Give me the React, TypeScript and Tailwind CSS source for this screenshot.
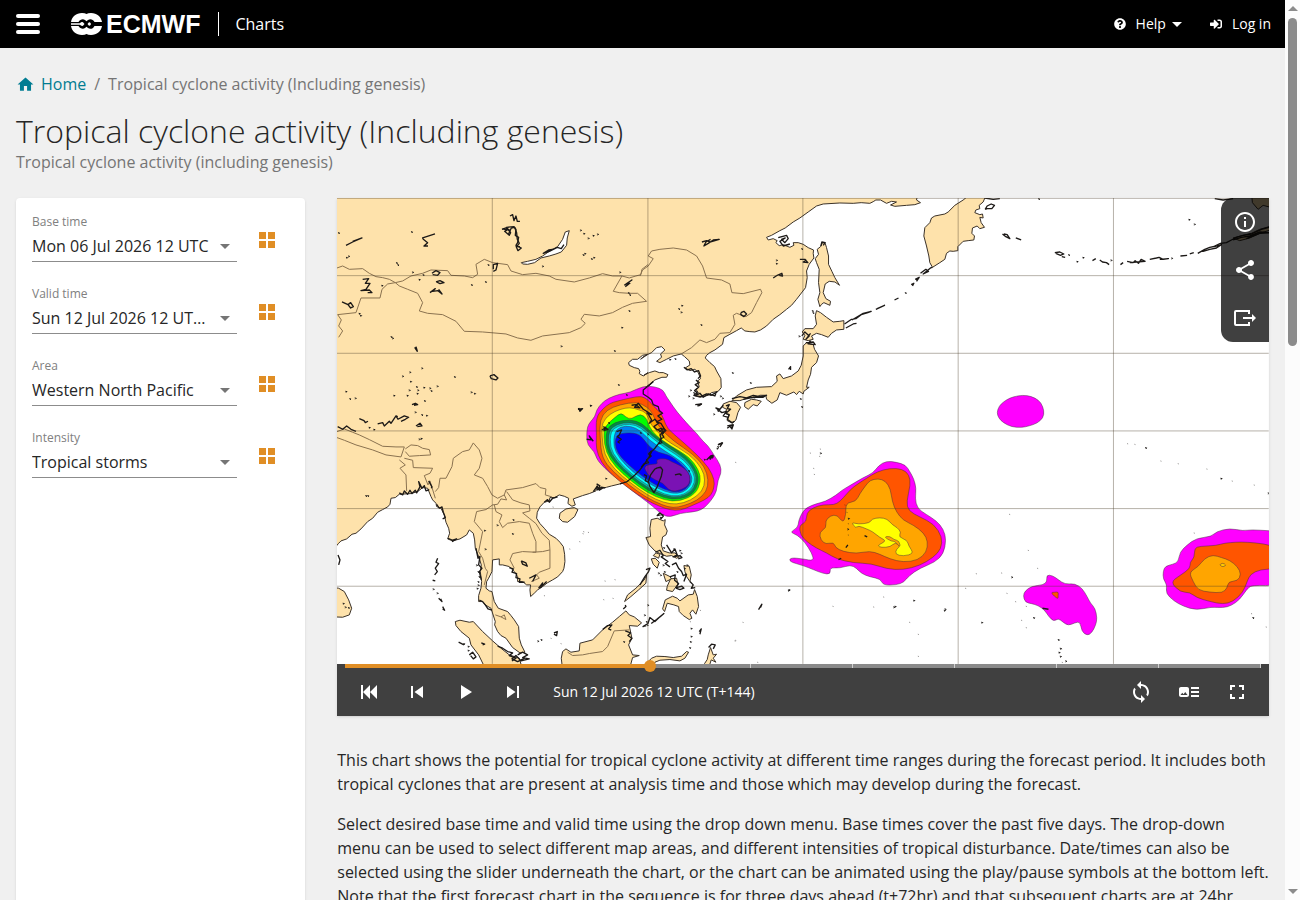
import { FaQuestionCircle, FaSignInAlt } from 'react-icons/fa';
import {
  MdArrowDropDown,
  MdArtTrack,
  MdFullscreen,
  MdHome,
  MdInfoOutline,
  MdLoop,
  MdPlayArrow,
  MdShare,
  MdSkipNext,
  MdSkipPrevious,
} from 'react-icons/md';

interface Field {
  id: string;
  label: string;
  value: string;
}

interface Layer {
  fill: string;
  points: string;
}

const fields: Field[] = [
  { id: 'base-time', label: 'Base time', value: 'Mon 06 Jul 2026 12 UTC' },
  { id: 'valid-time', label: 'Valid time', value: 'Sun 12 Jul 2026 12 UTC (T+144)' },
  { id: 'area', label: 'Area', value: 'Western North Pacific' },
  { id: 'intensity', label: 'Intensity', value: 'Tropical storms' },
];

const steps = [96, 120, 144, 168, 192, 216, 240, 264, 288];
const current = 144;

const LAND = '#fee2ab';
const COAST = '#3a3128';
const BORDER = '#8a714f';

// The map is drawn in sheets. Each sheet has its own origin on the 2796 x 1398 chart.
function sheet(dx: number, dy: number, points: string) {
  return points
    .trim()
    .split(/\s+/)
    .map(p => {
      const [x, y] = p.split(',').map(Number);
      return `${x + dx},${y + dy}`;
    })
    .join(' ');
}

// Closed curve through the midpoints of the outline
function smooth(points: string) {
  const list = points.split(' ').map(p => p.split(',').map(Number));
  const mids = list.map(([x, y], i) => {
    const [nx, ny] = list[(i + 1) % list.length];
    return [(x + nx) / 2, (y + ny) / 2];
  });
  const curves = mids.map((_, i) => {
    const next = (i + 1) % list.length;
    return `Q${list[next].join(',')} ${mids[next].join(',')}`;
  });
  return `M${mids[0].join(',')}${curves.join('')}Z`;
}

const nw = (p: string) => sheet(0, 0, p);
const north = (p: string) => sheet(912, 0, p);
const ne = (p: string) => sheet(1842, 0, p);
const sw = (p: string) => sheet(0, 687, p);
const storm = (p: string) => sheet(732, 552, p);
const south = (p: string) => sheet(912, 687, p);
const se = (p: string) => sheet(1842, 687, p);

const mainland = [
  north(`835,-10 830,12 842,20 825,26 800,28 765,31 752,27 770,18 755,16 740,22 722,12 708,12 700,17 690,22 664,20 640,22
    600,21 550,24 530,30 505,48 480,66 460,78 436,96 420,104 395,118 380,124 385,132 400,128 412,134 408,140 418,149 430,146
    450,154 462,148 460,140 475,140 490,145 505,155 521,162 520,172 522,186 508,205 500,225 502,245 497,275 470,310 455,328 440,340
    420,356 400,370 380,390 362,402 345,408 330,407 315,405 304,396 290,404 270,415 252,425 248,445 225,462 210,470 200,478
    196,486 210,500 224,512 230,525 243,548 244,575 235,586 215,590 205,598 180,604 166,600 175,590 168,580 178,572 172,556 182,548 175,530
    165,520 150,524 136,516 150,507 148,495 134,482 124,474 100,480 80,490 60,500 50,496 65,484 62,474 75,462 65,452 50,455 35,470 10,482 2,490`),
  nw('936,475 920,478 905,490 890,490 878,500 880,508 895,515 908,518 912,526 910,533 922,540 936,530'),
  north('12,538 28,530 45,525 58,530 70,530 84,536 80,544 66,544 45,552 30,565 22,570 15,575 5,590'),
  storm(`220,5 190,30 190,42 205,52 215,60 220,74 235,80 238,92 248,100 234,108 246,118 230,126 243,130 255,150 240,165 244,176 240,185 225,205
    215,215 208,230 195,250 180,270 165,285 150,298 140,306 120,312 95,318 80,322`),
  sw(`800,190 786,192 784,182 780,198 760,206 740,212 712,222 718,240 708,244 696,236 698,220 685,214 670,210 656,218 642,218 640,228 625,232 612,246
    604,262 602,280 612,296 625,310 640,328 660,340 672,352 682,365 686,388 687,410 684,430 680,440 665,456 650,465 634,474 620,485 605,495 595,505
    584,515 582,495 584,480 572,480 560,470 545,470 545,455 535,440 520,425 500,420 490,420 490,402 470,405 468,440 458,460 452,470 450,490 460,498 468,500
    475,530 487,550 515,560 525,572 535,585 548,605 550,640 556,660 567,682 552,684 530,668 510,640 495,632 485,620 476,600 478,590 465,550
    448,540 440,530 428,530 428,512 435,490 437,470 433,440 436,420 430,400 418,370 416,345 412,325 400,315 392,330 372,342 350,348 335,342 341,325
    338,310 330,292 325,270 315,250 302,245 300,235 290,225 285,215 275,190 260,188 245,200 225,206 190,208 178,218 165,220 162,238 155,246 140,254
    125,262 110,280 95,290 75,312 60,325 48,328 32,342 15,348 8,355 -6,372`),
].join(' ');

const islands = [
  // Kamchatka
  [
    north('878,214 870,200 867,180 860,150 852,120 855,95 870,80 875,66 885,60 915,54 925,48'),
    ne(`15,28 40,12 62,-6 110,-6 100,18 88,28 90,38 78,42 75,50 90,56 98,54 100,66 90,64 94,80 104,94 90,98 82,90 68,96 66,112
      74,120 72,132 55,134 40,136 32,144 24,152 24,164 10,166`),
    north('930,165 920,172 915,190 900,200'),
  ].join(' '),
  // Sakhalin
  north('548,140 556,142 560,155 566,180 566,205 576,226 585,245 599,268 585,258 568,256 556,264 550,290 558,308 572,316 570,328 552,320 545,325 540,332 534,310 540,290 536,260 538,220 530,200 526,188 536,175 532,160 542,152'),
  // Hokkaido
  north('530,344 542,350 560,364 580,378 600,376 612,374 612,400 590,402 575,412 565,424 545,416 530,412 515,420 520,430 505,434 490,430 495,418 487,408 495,398 520,398 530,385 526,360'),
  // Honshu
  north(`500,440 520,446 524,460 536,480 530,500 515,514 512,535 505,552 500,574 508,574 492,586 490,594 478,586 470,596 462,588 440,598 420,590 412,612
    396,622 380,610 378,598 360,598 345,606 330,604 300,614 276,614 290,600 320,582 350,574 395,572 412,556 410,540 420,534 430,548 455,540
    475,525 484,508 490,480 490,450`),
  // Shikoku
  north('315,620 335,610 350,612 364,616 352,630 340,626 325,640 314,632'),
  // Kyushu
  north('250,624 270,616 290,620 302,634 294,650 288,672 278,682 262,674 268,658 256,652 260,640 248,634'),
  // Hainan
  sw('672,265 690,252 715,248 726,254 716,275 695,292 680,290 670,280'),
  // Sri Lanka
  sw('-6,488 8,490 25,500 38,525 47,550 40,570 20,577 -6,576'),
  // Sumatra
  sw('358,590 372,586 400,592 412,590 440,620 470,648 495,670 520,690 550,700 560,735 450,735 428,690 405,660 400,640 375,620 360,602'),
  // Borneo
  sw(`680,735 676,700 680,680 690,672 705,682 730,678 732,655 770,645 800,615 830,592 850,575 870,558 880,570 895,576 917,594 905,604 880,602
    888,640 878,660 890,690 910,692 890,698 880,735`),
  // Palawan
  sw('866,530 875,510 900,490 925,465 932,450 930,475 908,495 885,515'),
  // Sulawesi
  south('20,715 35,700 50,694 75,695 100,698 125,694 140,680 146,682 135,700 120,708 90,704 60,706 45,712 38,730 15,735'),
  // Luzon
  south('34,284 52,280 70,288 76,284 74,300 82,318 78,330 68,336 64,360 70,378 88,384 105,384 118,396 110,400 95,392 80,394 60,386 45,378 28,360 18,338 32,335 30,310'),
  // Visayas
  south('34,402 46,400 58,412 52,430 40,418'),
  south('132,422 148,424 154,450 150,470 140,455 135,440'),
  south('70,445 90,455 95,462 78,470'),
  south('92,462 110,460 114,478 98,500 80,496 82,484'),
  // Mindanao
  south('164,494 172,515 176,545 168,568 158,555 150,565 156,580 148,584 130,572 118,560 116,545 102,540 82,535 74,560 68,552 76,525 98,514 112,520 120,528 145,510 160,508'),
  // Halmahera
  south('205,690 212,668 220,690 230,688 220,700 228,712 214,705 206,730 194,716 202,704'),
  // Mindoro
  south('48,384 60,388 56,400 40,392'),
  // Alaska peninsula
  ne('850,126 880,118 905,112 930,100 965,90 962,102 930,112 900,126 870,134'),
  ne('905,-10 908,20 925,40 940,28 970,36 970,-10'),
];

const lakes = [
  nw('556,200 575,196 600,190 620,180 640,166 665,152 680,130 688,108 700,104 694,126 692,148 676,168 660,174 640,180 615,186 596,200 575,205 560,204'),
];

const borders = [
  nw('3,216 20,210 40,220 80,218 100,232 120,242 140,245 160,250 178,260 200,255 225,240 260,232 285,222 335,224 345,238 385,240 410,245 425,235 420,205 445,190 470,200 515,206 525,225 560,236 600,232 640,240 660,250 715,258 760,246 800,233 830,240 858,240 832,286 850,290 880,292 905,292 932,316'),
  nw('178,260 190,270 215,280 245,292 260,320 250,345 275,352 320,356 360,376 385,406 440,408 510,414 545,426 585,433 620,420 700,410 735,395 748,382 735,370 745,355 790,360 830,350 860,334 890,322 932,316'),
  nw('178,260 155,264 138,280 132,306 75,306 60,350 5,356 16,372 8,390 20,405 8,424'),
  nw('858,240 880,246 900,240 915,236 918,220 936,206'),
  north('0,240 8,222 25,210 40,188 25,180 35,165 60,160 100,156 140,162 170,180 188,210 200,246 245,252 270,264 276,290 310,293 362,280 366,290 350,320 335,350 318,362 290,352 280,358 285,385 270,410 240,412 225,430 200,440 180,432 155,455 124,474'),
  sw('3,20 25,12 50,22 70,30 100,44 140,64 180,66 205,66 195,96 150,90 110,75 60,60 25,46 3,38'),
  sw('208,72 225,60 245,62 260,70 280,74 284,90 250,92 220,94 208,80'),
  sw('205,100 230,106 232,128 290,130 282,145 265,152 276,180 282,168 298,220'),
  sw('190,105 208,120 192,130 210,150 212,198'),
  sw('298,200 308,188 312,160 330,160 348,125 352,100 380,80 400,75 412,54 430,75 438,100 430,130 415,150 440,160 455,185 468,210 485,220 505,210 512,225 495,222 485,238 470,240 450,254 422,260 415,290 440,320 428,380 440,400 448,430 455,440 445,480'),
  sw('505,210 510,195 560,188 600,176 612,188 630,192 628,210 648,216'),
  sw('512,200 530,225 555,234 580,240 582,258 560,264 580,280 600,296 618,325 640,346 642,375 620,380 590,382'),
  sw('475,240 480,260 498,270 490,290 500,308 515,295 550,290 580,295 590,325 600,350 600,382 560,380 530,386 522,405 535,430'),
  sw('642,375 642,430 610,442 602,450 610,460 586,470'),
  sw('478,570 495,576 505,570 510,584 495,576'),
  sw('695,682 710,692 740,690 760,686 800,680 815,665 835,618 880,615'),
];

const lines = [
  nw('30,148 50,138 78,126 50,136'),
  nw('297,114 260,126 262,130 275,140 264,150 276,150'),
  nw('522,60 530,56 534,74 540,60 544,76 552,76'),
  nw('500,98 514,102 506,106 520,118 524,110 512,94 534,92 540,100 538,118 548,124 545,140 540,148 556,156 546,164 540,150'),
  nw('498,100 510,96 522,104 518,114 526,96 536,94 542,110 544,130 550,142 542,152 552,152'),
  nw('472,220 472,206 485,202 480,222 472,226'),
  nw('288,232 300,224 312,230 305,238 290,236'),
  nw('300,258 312,254 324,260 312,263 302,258'),
  nw('282,290 298,278 290,286 306,284 318,294 308,280'),
  nw('80,250 98,248 88,262 102,262 90,280 75,284 100,282 108,290 95,290'),
  nw('36,326 44,320 52,332 44,336 36,326 18,318'),
  nw('462,540 474,536 486,546 480,552 466,548 462,540'),
  nw('236,454 244,466 240,452'),
  nw('865,268 888,252 870,264 882,262 868,272'),
  nw('726,640 740,638 732,646 728,636'),
  nw('630,168 650,160 638,162 622,172 640,166 664,154 676,158 684,146'),
  nw('240,690 252,682 258,690 244,692'),
  nw('70,668 84,674 88,680 96,676'),
  nw('125,684 140,680 145,690 160,676 165,682 180,660 186,670 205,660 218,664 208,670 195,676'),
  nw('5,692 20,700 32,690 45,700 60,706'),
  nw('228,626 238,622 245,626 234,628'),
  north('186,138 200,134 210,138 238,130 220,132 205,142 192,150 198,138 212,130'),
  north('400,246 412,238 426,232 428,240 418,238'),
  north('415,125 440,118 445,128 435,140 425,130 436,126 420,136 430,150 450,144'),
  north('480,190 495,190 504,200 490,198 500,192'),
  north('543,150 546,138 556,140 550,148'),
  north('303,350 312,346 320,354 312,362 303,356 303,350'),
  north('498,440 520,438 526,446 505,444 512,434'),
  north('486,420 495,408 508,420 498,430 512,412'),
  north('614,384 635,370 648,368 664,356 684,350 694,346 670,352 650,364 636,372'),
  north('618,396 640,384 650,382'),
  north('708,340 734,328 712,338'),
  north('764,312 776,306'),
  north('814,266 822,262 818,270'),
  north('826,250 838,244 830,256'),
  north('842,232 858,220 866,226 850,234 872,216 878,214'),
  north('446,520 452,512 452,522'),
  north('276,608 300,602 320,606 340,598 360,602 380,598 370,604 340,604 310,610'),
  north('250,628 240,640 228,636 246,650 260,646 250,660 265,664'),
  north('164,600 180,592 190,604 205,594 225,600 228,592'),
  north('168,552 178,560 166,566 176,574 164,584 172,590 162,598 182,602 200,594 214,598 232,588'),
  north('132,514 142,522 154,518 164,528 176,524 182,540 174,548'),
  north('258,630 268,626 262,638 272,640 258,652 268,656 262,670 276,680 284,676'),
  north('262,690 280,686 274,696'),
  north('166,626 185,624 176,630'),
  ne('106,40 112,30 124,24 134,28 126,38 112,38 106,40'),
  ne('158,114 168,122 180,128 172,116 162,114'),
  ne('198,126 214,132'),
  ne('315,170 330,168 342,174 332,178 318,172'),
  ne('336,182 346,184'),
  ne('428,194 438,188'),
  ne('450,192 458,198 470,200 478,206'),
  ne('512,206 520,200'),
  ne('532,196 550,200 556,194 566,202 574,190 586,196 560,198 540,200'),
  ne('600,190 620,186 628,184 640,190 656,188 630,190'),
  ne('692,180 712,178'),
  ne('720,174 732,170'),
  ne('744,172 765,160 780,154 800,150 815,146 800,156 780,160 760,166'),
  ne('795,150 812,142 830,140 845,132 860,124 880,118 905,114 935,100 965,92'),
  ne('850,132 875,124 900,120 930,108 960,110 930,112 890,128'),
  ne('105,6 130,10 150,8'),
  ne('795,8 820,12 850,8'),
  storm('155,76 168,74 180,84 164,82 175,70 190,88 200,94 215,104 200,100'),
  storm('200,94 215,120 208,130 225,118 236,130 222,140 232,150 244,145 250,160 235,150'),
  storm('66,150 78,142 72,152 84,148 70,140'),
  storm('20,178 34,180 28,168 40,184'),
  storm('110,155 125,150 118,165 112,170 124,178 114,186 120,190'),
  storm('50,312 60,318 52,330 64,322 76,324'),
  storm('232,264 242,262 248,270 244,290 232,320 222,338 210,320 205,305 212,285 224,268 232,264'),
  storm('192,284 200,288 196,302 208,308'),
  storm('285,285 298,282 304,284'),
  storm('380,240 392,228 398,226 388,236'),
  storm('415,194 428,188'),
  storm('238,156 250,146 258,152 246,162 252,172 240,178 246,188 236,192'),
  storm('215,212 206,222 214,228 200,240 206,248 192,252 184,262'),
  sw('190,204 200,210 205,198 215,208 222,196 228,206 238,196 242,204 252,186 248,170 258,190 265,182 270,198 280,194'),
  sw('278,168 288,186 286,190'),
  sw('302,238 310,250 318,246 322,262 328,278 320,282'),
  sw('336,340 350,346 362,342 348,350'),
  sw('305,400 300,412 308,416 298,430 304,440 296,450'),
  sw('290,466 298,468'),
  sw('308,520 318,530 314,522'),
  sw('320,545 326,556 320,552'),
  sw('420,370 426,400 432,395 428,420 438,430 430,440 436,465'),
  sw('430,526 440,530 448,540 456,552 468,556'),
  sw('556,408 570,414 574,424 560,418 556,408'),
  sw('580,460 600,450 590,470'),
  sw('608,490 620,474 614,488 632,470'),
  sw('520,428 532,432 528,442 542,446 540,458 552,462 550,472 566,472'),
  sw('625,232 635,224 640,232 650,220 665,216'),
  sw('772,200 784,184 790,196 800,190'),
  sw('545,690 560,682 575,690 560,698 580,702 555,708 540,692 528,702 545,710 566,700'),
  sw('485,664 500,670 515,680 530,684 520,692 540,700 528,708'),
  sw('400,690 410,682 420,696 412,702 404,692'),
  sw('368,652 384,660'),
  sw('436,654 446,658 440,660'),
  sw('654,624 664,620 662,632 654,628'),
  sw('800,614 815,602 828,600 818,612 826,616'),
  sw('868,618 884,624 876,632 888,640 880,650'),
  sw('862,552 870,545 868,540'),
  sw('8,420 12,405 6,390'),
  south('80,360 95,384 105,372 112,390 100,396 120,392 126,398 115,402'),
  south('46,382 60,376 70,392 64,396 84,410 76,416 90,426'),
  south('96,420 108,414 116,430 125,440 130,452 140,448 132,470'),
  south('90,456 106,450 104,466 116,476 108,488 126,484 132,490 120,494 108,490'),
  south('150,470 160,480 154,490 166,488'),
  south('8,606 24,596 30,578 45,590 60,576 72,566 50,584 34,596'),
  south('210,104 216,96 222,92'),
  south('234,60 248,54 240,66'),
  south('262,10 270,4 276,12 280,0'),
  south('356,554 366,538 362,548'),
  south('178,620 184,612 180,628'),
  south('206,668 215,658 226,660 220,672'),
  south('0,480 15,455 26,440 30,430 18,434'),
  south('674,332 682,336'),
  south('66,268 52,272 60,264 70,274 62,282'),
  south('596,404 604,400'),
  south('618,368 624,360'),
  se('278,550 296,553'),
];

// Small lakes and islets, one tick each
const specks = [
  nw(`6,110 225,107 180,200 184,206 228,228 260,236 248,250 405,266 447,257 455,206 618,210 36,180 30,184 740,176 745,172 765,188
    772,184 755,126 770,118 783,114 742,112 732,102 878,344 856,394 674,450 834,464 846,566 762,628 168,426 164,422 354,542 256,516
    220,528 198,540 222,556 240,572 262,574 280,576 302,570 284,584 244,582 218,582 242,592 212,598 172,598 264,614 404,588 414,592
    28,586 40,608 56,606 236,648 256,656 270,658 180,660 98,694 112,700 850,228 876,290 880,296 68,352 72,358 136,268`),
  north(`124,328 115,338 122,348 182,386 408,192 408,202 484,158 276,530 330,560 516,344 518,350 476,420 795,290 480,608 484,632
    240,600 220,654 232,644 150,582 145,600 246,606 160,590 158,606 88,490 104,488`),
  ne('265,8 398,184 355,176 664,186 716,70 732,84 482,192 380,196'),
  sw(`88,212 94,212 248,42 254,40 808,160 482,300 530,284 528,326 446,372 444,316 290,492 302,504 395,664 395,676 382,656 604,648 614,644
    862,650 924,602 932,600 924,570 930,590 26,546 36,548 20,535 425,440 425,470 420,420 428,455 422,490 425,480`),
  storm('30,76 138,44 85,128 180,158 202,162 325,272 300,284 360,72 352,76 410,205 395,232 372,238 412,200 236,400 246,404 240,412'),
  south(`540,84 624,280 622,312 446,494 444,496 764,544 760,546 820,526 912,556 914,552 152,610 152,634 150,650 148,668
    122,384 118,376 100,372 70,368 132,430 140,420 68,420 72,440 60,450 54,444 110,440 22,540`),
  se(`586,68 812,160 954,204 184,456 94,592 250,578 324,644 330,670 326,682 330,694 346,708 908,578`),
];

// Atolls, barely visible at this scale
const atolls = [
  sw(`624,512 650,246 756,322 740,326 730,350 700,372 742,320 806,468 836,464 830,520 802,524 644,640 674,656`),
  south(`286,112 540,72 538,94 510,84 520,130 522,148 624,296 624,330 620,262 614,240 700,546 578,544 834,628 834,694 808,592
    286,646 284,648 352,712 150,590 730,516 308,592 180,556`),
  se(`532,56 554,58 632,108 684,116 770,132 846,168 912,180 178,268 732,324 234,376 262,430 154,444 78,446 46,490 228,608 214,586
    228,544 196,530 170,505 334,672 336,712 904,566 948,606`),
];

const layers: Layer[] = [
  // Typhoon over the East China coast
  { fill: '#ff00ff', points: storm('20,170 22,140 32,125 45,110 50,90 65,70 85,55 120,42 150,38 190,18 225,20 250,30 258,48 270,65 290,95 330,140 350,160 370,185 385,198 402,225 422,255 424,280 414,300 410,335 398,355 385,372 365,390 340,396 300,400 270,412 245,404 220,380 180,350 160,335 130,310 90,280 60,250 50,235 43,215 23,195') },
  { fill: '#ff5500', points: storm('48,112 70,85 90,70 110,64 150,54 185,48 205,60 222,80 242,98 252,118 262,146 300,178 350,223 387,263 404,300 402,325 394,345 375,360 330,380 300,392 270,390 240,380 198,360 148,327 98,287 63,247 48,205 50,170') },
  { fill: '#ffa500', points: storm('60,120 80,90 120,74 170,66 200,80 217,98 228,126 246,150 280,183 340,223 374,260 386,300 380,335 352,362 310,378 280,384 248,376 198,352 148,316 98,274 66,234 60,170') },
  { fill: '#ffff00', points: storm('66,128 90,102 120,88 150,82 178,90 200,98 210,130 230,153 260,183 330,223 367,266 376,300 368,334 332,362 290,374 250,368 203,346 153,310 103,268 73,224 66,170') },
  { fill: '#00ff00', points: storm('74,140 104,113 124,98 138,112 154,118 182,100 202,118 208,140 227,166 270,197 327,230 357,270 363,305 347,342 300,365 253,361 203,339 153,303 105,260 78,217 71,170') },
  { fill: '#008f45', points: storm('78,150 103,127 150,118 187,130 217,161 262,193 322,231 352,273 357,308 339,343 298,359 253,355 203,331 153,295 105,250 79,208') },
  { fill: '#00c8b4', points: storm('86,152 110,133 150,126 186,138 215,167 260,199 318,237 346,276 350,308 333,337 296,353 253,348 206,325 153,287 109,244 85,204') },
  { fill: '#00ffff', points: storm('92,154 114,138 150,131 184,143 213,172 258,205 315,241 342,279 345,308 329,334 295,350 254,344 208,320 154,282 112,240 90,202') },
  { fill: '#0080f0', points: storm('104,156 122,140 152,138 182,152 209,181 254,213 310,248 335,283 337,306 322,330 294,342 256,336 212,314 158,276 119,236 100,200') },
  { fill: '#0000ff', points: storm('106,172 126,158 174,160 193,180 209,201 237,219 267,224 302,250 327,279 333,306 319,328 290,338 256,330 214,308 165,272 124,234 106,205') },
  { fill: '#7a12b4', points: storm('228,238 258,235 275,246 300,256 326,276 332,300 322,322 285,336 264,328 250,310 225,300 204,286 190,258 222,252 234,252') },
  // Philippine Sea
  { fill: '#ff00ff', points: south('450,322 474,308 476,288 486,264 500,248 530,236 556,230 590,210 606,196 630,182 670,158 700,144 716,122 740,108 770,112 797,120 810,140 822,162 829,190 826,220 832,250 860,269 890,288 911,313 919,345 911,387 885,412 840,430 808,452 792,472 770,480 730,481 722,462 690,456 665,446 650,430 632,420 600,430 570,428 572,448 550,446 520,434 490,422 448,410 452,398 490,402 522,408 516,385 495,352 472,330') },
  { fill: '#ff5500', points: south('478,302 500,290 500,264 520,248 550,239 582,240 600,230 622,205 640,186 680,160 712,140 750,130 787,132 808,149 812,180 800,230 806,258 840,276 882,297 907,336 904,372 880,398 840,422 790,435 740,432 695,416 640,414 590,402 560,384 530,370 500,350 482,330') },
  { fill: '#ffa500', points: south('538,322 560,308 556,288 572,272 592,270 610,294 618,270 618,234 648,230 660,206 676,184 690,166 715,161 737,168 752,192 757,230 770,262 790,286 820,300 852,324 864,350 860,382 834,406 790,412 750,402 720,388 690,378 650,386 610,380 586,368 582,352 558,358 543,346') },
  { fill: '#ffff00', points: south('634,292 655,298 690,294 696,282 720,278 742,282 758,300 772,308 784,322 776,336 802,346 806,362 822,386 790,394 766,388 770,372 782,364 766,352 752,366 724,368 712,362 740,348 720,338 698,320 680,312 655,302 648,310') },
  { fill: '#ffa500', points: south('732,336 750,334 762,344 778,348 782,368 764,348 756,350') },
  // Mid ocean
  { fill: '#ff00ff', points: ne('141,650 148,630 162,617 180,606 205,599 232,598 256,606 274,620 283,645 280,666 262,682 238,690 215,695 185,693 160,680 147,667') },
  { fill: '#ff00ff', points: se('220,512 226,498 245,484 280,480 292,470 290,450 308,452 325,464 345,478 375,476 397,490 412,515 422,535 436,550 442,580 438,600 426,624 412,632 396,620 391,590 375,594 355,602 340,592 325,580 312,590 296,574 284,555 265,542 245,536 226,532') },
  { fill: '#ff5500', points: se('302,503 315,502 326,501 325,512 325,524') },
  // East edge
  { fill: '#ff00ff', points: se('640,440 646,424 670,418 686,410 690,382 712,360 740,340 785,335 800,320 840,310 880,318 905,314 960,318 990,318 990,484 905,480 890,495 870,524 845,542 820,549 785,546 740,556 700,544 672,528 648,505 652,480 640,462') },
  { fill: '#ff5500', points: se('662,472 690,452 722,430 720,412 734,398 734,370 750,364 800,362 825,354 890,350 990,364 990,430 930,434 902,448 892,470 880,502 850,530 820,538 780,530 740,518 720,502 692,502') },
  { fill: '#ffa500', points: se('718,442 745,426 765,400 790,390 815,398 840,406 864,426 874,448 864,468 836,470 832,490 818,504 780,502 745,496 730,470') },
  { fill: '#ffcc00', points: se('808,420 818,414 830,420 820,427') },
];

function marks(sheets: string[], shape: string) {
  return sheets
    .join(' ')
    .split(' ')
    .map(p => `M${p}${shape}`)
    .join('');
}

function CycloneMap() {
  return (
    <svg viewBox="3 6 2796 1398" className="block w-full" role="img" aria-label="Tropical cyclone activity map">
      <rect x="3" y="6" width="2796" height="1398" fill="#ffffff" />
      <polygon points={`${mainland} -20,1060 -20,-20 1740,-20`} fill={LAND} stroke={COAST} strokeWidth="3" />
      {islands.map(points => (
        <polygon key={points} points={points} fill={LAND} stroke={COAST} strokeWidth="3" strokeLinejoin="round" />
      ))}
      {lakes.map(points => (
        <polygon key={points} points={points} fill="#ffffff" stroke={COAST} strokeWidth="3" />
      ))}
      {borders.map(points => (
        <polyline key={points} points={points} fill="none" stroke={BORDER} strokeWidth="3" />
      ))}
      {layers.map(layer => (
        <path key={layer.points} d={smooth(layer.points)} fill={layer.fill} stroke="#3f2a3c" strokeOpacity="0.7" strokeWidth="2" />
      ))}
      <g fill="none" stroke="#1c1917" strokeWidth="4" strokeLinejoin="round">
        <polyline points={storm('220,5 190,30 190,42 205,52 215,60 220,74 235,80 238,92 248,100 234,108 246,118 230,126 243,130 255,150 240,165 244,176 240,185 225,205 215,215 208,230 195,250 180,270 165,285 150,298 140,306 120,312')} />
        {lines.map(points => (
          <polyline key={points} points={points} />
        ))}
        <path d={marks(specks, 'l5,1l-3,3')} strokeWidth="3" />
        <path d={marks(atolls, 'l3,1')} strokeWidth="3" strokeOpacity="0.5" />
      </g>
      <path
        d="M469,6V1404M936,6V1404M1401,6V1404M1867,6V1404M2333,6V1404M3,239H2799M3,472H2799M3,705H2799M3,938H2799M3,1171H2799M3,7H2799"
        fill="none"
        stroke="#4a3c28"
        strokeOpacity="0.4"
        strokeWidth="3"
      />
    </svg>
  );
}

function Logo() {
  return (
    <a href="#" className="flex items-center gap-1 text-white" aria-label="ECMWF">
      <svg viewBox="0 0 31 22" className="h-[22px] w-[31px]" aria-hidden="true">
        <path
          d="M11 0Q14 0 15.500 1Q17 0 20 0C26 0 30 3.500 31 9V13C30 18.500 26 22 20 22Q17 22 15.500 21Q14 22 11 22C5 22 1 18.500 0 13V9C1 3.500 5 0 11 0Z"
          fill="currentColor"
        />
        <path
          d="M0 9H7.500C9 6.500 12 5.500 14 7L15.500 8.200L17 7C19 5.500 22 6 23.500 9H31V13H23.500C22 16 19 16.500 17 15L15.500 13.800L14 15C12 16.500 9 15.500 7.500 13H0Z"
          fill="#000000"
        />
        <path d="M0 10.200H9Q10 8.800 12 9.200L13.500 11L12 12.800Q10 13.200 9 11.800H0ZM18 9.200L16.500 11L18 12.800Q19.500 13 20 11Q19.500 9 18 9.200Z" fill="currentColor" />
      </svg>
      <span className="font-['Liberation_Sans',sans-serif] text-[25px] leading-6 font-bold">ECMWF</span>
    </a>
  );
}

function Header() {
  return (
    <header className="flex h-12 shrink-0 items-center bg-black pr-3.5 pl-4 text-white">
      <button type="button" aria-label="Menu" className="mr-[31px] flex w-6 flex-col gap-1">
        <span className="h-1 rounded-xs bg-white" />
        <span className="h-1 rounded-xs bg-white" />
        <span className="h-1 rounded-xs bg-white" />
      </button>
      <Logo />
      <a href="#" className="ml-[18px] flex h-6 items-center border-l border-white pl-4">
        Charts
      </a>
      <nav className="ml-auto flex items-center gap-7 text-sm">
        <button type="button" className="flex items-center">
          <FaQuestionCircle className="mr-2.5 size-3" />
          Help
          <svg viewBox="0 0 10 5" className="ml-1.5 h-[5px] w-2.5" aria-hidden="true">
            <path d="M0 0H10L5 5Z" fill="currentColor" />
          </svg>
        </button>
        <a href="#" className="flex items-center gap-2.5">
          <FaSignInAlt className="size-3" />
          Log in
        </a>
      </nav>
    </header>
  );
}

function FieldRow({ field }: { field: Field }) {
  return (
    <div className="flex h-[72px] gap-2">
      <div className="min-w-0 flex-1">
        <label htmlFor={field.id} className="block text-xs leading-4 text-[#808080]">
          {field.label}
        </label>
        <div className="relative">
          <select
            id={field.id}
            className="h-8 w-full appearance-none overflow-hidden border-b border-[#8c8c8c] bg-transparent pr-6 text-base text-ellipsis whitespace-nowrap text-[#262626]"
          >
            <option>{field.value}</option>
          </select>
          <MdArrowDropDown className="pointer-events-none absolute top-1 right-0 size-6 text-[#757575]" />
        </div>
      </div>
      <button type="button" aria-label={`Show all: ${field.label}`} className="mt-1 flex size-11 items-center justify-center">
        <svg viewBox="0 0 16 16" className="size-4 text-[#e08e25]" aria-hidden="true">
          <path d="M0 0H7V7H0ZM9 0H16V7H9ZM0 9H7V16H0ZM9 9H16V16H9Z" fill="currentColor" />
        </svg>
      </button>
    </div>
  );
}

function Timeline() {
  return (
    <div className="relative mx-2 flex h-1">
      {steps.map(step => (
        <span
          key={step}
          className={step <= current ? 'flex-1 bg-[#e08e25]' : 'flex-1 border-r border-[#d0d0d0] bg-[#8a8a8a]'}
        />
      ))}
      <input
        type="range"
        aria-label="Forecast step"
        min={72}
        max={288}
        step={24}
        defaultValue={current}
        className="absolute -inset-x-1.5 -top-1 h-3 appearance-none bg-transparent [&::-webkit-slider-thumb]:size-3 [&::-webkit-slider-thumb]:appearance-none [&::-webkit-slider-thumb]:rounded-full [&::-webkit-slider-thumb]:bg-[#e08e25]"
      />
    </div>
  );
}

function Player() {
  return (
    <div className="bg-[#404040] text-white">
      <Timeline />
      <div className="flex h-12 items-center px-2">
        <button type="button" aria-label="First" className="flex size-12 items-center justify-center">
          <svg viewBox="0 0 24 24" className="size-6" aria-hidden="true">
            <path d="M4 5H6V19H4ZM13 5V19L6 12ZM20 5V19L13 12Z" fill="currentColor" />
          </svg>
        </button>
        <button type="button" aria-label="Previous" className="flex size-12 items-center justify-center">
          <MdSkipPrevious className="size-6" />
        </button>
        <button type="button" aria-label="Play" className="flex size-12 items-center justify-center">
          <MdPlayArrow className="size-6" />
        </button>
        <button type="button" aria-label="Next" className="flex size-12 items-center justify-center">
          <MdSkipNext className="size-6" />
        </button>
        <p className="ml-4 text-sm">Sun 12 Jul 2026 12 UTC (T+144)</p>
        <button type="button" aria-label="Loop" className="ml-auto flex size-12 items-center justify-center">
          <MdLoop className="size-6" />
        </button>
        <button type="button" aria-label="Legend" className="flex size-12 items-center justify-center">
          <MdArtTrack className="size-6" />
        </button>
        <button type="button" aria-label="Full screen" className="flex size-12 items-center justify-center">
          <MdFullscreen className="size-6" />
        </button>
      </div>
    </div>
  );
}

function Chart() {
  return (
    <div className="relative shadow-sm">
      <CycloneMap />
      <div className="absolute top-0 right-0 flex flex-col rounded-l-xl bg-black/75 text-white">
        <button type="button" aria-label="Information" className="flex size-12 items-center justify-center">
          <MdInfoOutline className="size-6" />
        </button>
        <button type="button" aria-label="Share" className="flex size-12 items-center justify-center">
          <MdShare className="size-6" />
        </button>
        <button type="button" aria-label="Export" className="flex size-12 items-center justify-center">
          <svg viewBox="0 0 24 24" className="size-6" aria-hidden="true">
            <path d="M16 8V5H3Q2 5 2 6V18Q2 19 3 19H16V16" fill="none" stroke="currentColor" strokeWidth="2" />
            <path d="M10 11H19V8L23 12L19 16V13H10Z" fill="currentColor" />
          </svg>
        </button>
      </div>
      <Player />
    </div>
  );
}

function Scrollbar() {
  return (
    <div className="flex w-[15px] shrink-0 flex-col items-center bg-[#fcfcfc] py-1.5" aria-hidden="true">
      <svg viewBox="0 0 10 5" className="h-[5px] w-2.5">
        <path d="M0 5H10L5 0Z" fill="#8b8b8b" />
      </svg>
      <div className="mt-[7px] h-[328px] w-[9px] rounded-full bg-[#8b8b8b]" />
      <svg viewBox="0 0 10 5" className="mt-auto h-[5px] w-2.5">
        <path d="M0 0H10L5 5Z" fill="#8b8b8b" />
      </svg>
    </div>
  );
}

export default function App() {
  return (
    <div className="flex h-screen bg-[#f0f0f0] font-['Open_Sans','Noto_Sans',sans-serif] text-base text-[#262626]">
      <div className="flex min-w-0 flex-1 flex-col overflow-hidden">
        <Header />
        <div className="px-4 pt-6">
          <nav aria-label="Breadcrumb" className="flex items-center leading-6 text-[#757575]">
            <a href="#" className="flex items-center gap-1.5 text-[#007c92]">
              <MdHome className="size-[19px]" />
              Home
            </a>
            <span className="mx-2">/</span>
            <span>Tropical cyclone activity (Including genesis)</span>
          </nav>
          <h1 className="mt-4 text-[32px] leading-[38px] font-light">Tropical cyclone activity (Including genesis)</h1>
          <p className="leading-6 text-[#757575]">Tropical cyclone activity (including genesis)</p>
        </div>
        <div className="mt-6 flex flex-1">
          <div className="flex w-1/4 px-4">
            <form className="w-full rounded-t-sm bg-white px-4 pt-4 shadow-sm">
              {fields.map(field => (
                <FieldRow key={field.id} field={field} />
              ))}
            </form>
          </div>
          <main className="w-3/4 px-4">
            <Chart />
            <div className="mt-8 space-y-4 leading-6">
              <p>
                This chart shows the potential for tropical cyclone activity at different time ranges during the forecast
                period. It includes both tropical cyclones that are present at analysis time and those which may develop
                during the forecast.
              </p>
              <p>
                Select desired base time and valid time using the drop down menu. Base times cover the past five days. The
                drop-down menu can be used to select different map areas, and different intensities of tropical
                disturbance. Date/times can also be selected using the slider underneath the chart, or the chart can be
                animated using the play/pause symbols at the bottom left. Note that the first forecast chart in the
                sequence is for three days ahead (t+72hr) and that subsequent charts are at 24hr
              </p>
            </div>
          </main>
        </div>
      </div>
      <Scrollbar />
    </div>
  );
}
